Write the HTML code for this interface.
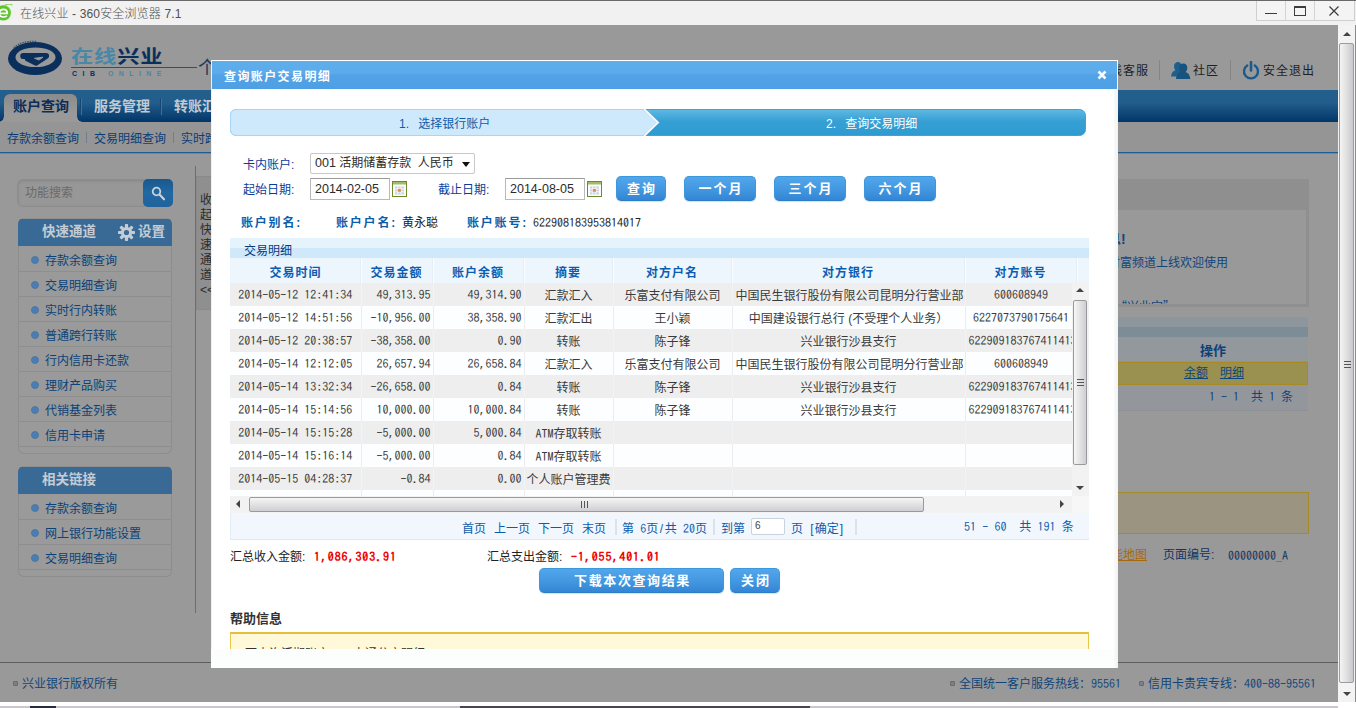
<!DOCTYPE html>
<html lang="zh-CN">
<head>
<meta charset="utf-8">
<title>在线兴业 - 360安全浏览器 7.1</title>
<style>
*{box-sizing:border-box;margin:0;padding:0}
html,body{width:1356px;height:708px;overflow:hidden;background:#fff}
body{position:relative;font-family:"Liberation Sans","Noto Sans CJK SC",sans-serif;font-size:12px;color:#333}
.a{position:absolute;white-space:nowrap}
.num{font-family:"Liberation Sans","Noto Sans CJK SC",sans-serif}
/* ---------- browser chrome ---------- */
#titlebar{left:0;top:0;width:1356px;height:25px;background:#f1f1f1;border-top:1px solid #696969}
#titlebar .t{left:20px;top:0;height:24px;line-height:26px;font-size:12px;letter-spacing:0.150px;font-weight:300;color:#505050}
#winbtn{left:1256px;top:0;width:99px;height:20px;border:1px solid #cfcfcf;border-top:none;background:#f4f4f4}
#winbtn i{position:absolute;top:0;width:1px;height:19px;background:#d4d4d4}
/* ---------- page under overlay ---------- */
#page{left:0;top:25px;width:1338px;height:677px;background:#999;overflow:hidden}
#nav{left:0;top:65px;width:1338px;height:32px;background:linear-gradient(#235f8d 0,#225d8b 40%,#0f4678 75%,#023568 100%)}
#tab1{left:4px;top:69px;width:73px;height:28px;border-radius:6px 6px 0 0;background:linear-gradient(#8b8b8b,#999 70%)}
.navt{top:69px;height:24px;line-height:24px;font-size:14px;font-weight:bold;letter-spacing:0;color:#c3cad1}
.navsep{top:73px;width:1px;height:17px;background:#164a75;box-shadow:1px 0 0 #3a709c}
#sub{left:0;top:97px;width:1338px;height:30px;background:#959595}
#subline{left:0;top:127px;width:1338px;height:2px;background:#1e5c94;border-bottom:1px solid #6d86a0}
.subt{top:105px;height:18px;line-height:18px;color:#0a3d75}
.subs{top:107px;width:1px;height:11px;background:#6f7f90}
.toplink{top:37px;height:18px;line-height:18px;font-size:12px;letter-spacing:1px;color:#1f1f1f}
.topsep{top:35px;width:1px;height:20px;background:#858585}
/* sidebar */
#search{left:17px;top:154px;width:156px;height:28px;border-radius:6px;background:#979797;border:1px solid #8d8d8d;box-shadow:inset 0 1px 3px #858585}
#sbtn{left:143px;top:154px;width:30px;height:28px;border-radius:5px;background:linear-gradient(#19588c,#2268a3 50%,#20639c)}
.panel{left:18px;width:154px;box-shadow:inset 0 0 0 1px #8d8d8d;border-radius:6px;background:#9a9a9a;overflow:hidden}
.ph{position:absolute;left:0;top:1px;width:154px;height:27px;background:#396a95;color:#c6ccd3;font-weight:bold;font-size:13.500px;letter-spacing:0;line-height:25px}
.pi{position:absolute;left:0;width:100%;height:25px;margin-top:2px;border-bottom:1px solid #8e8e8e;line-height:29px;color:#0a4279;padding-left:27px}
.pi:before{content:"";position:absolute;left:13px;top:9px;width:6px;height:6px;border-radius:4px;background:#447fba;border:1px solid #587596}
#vline{left:195px;top:141px;width:1px;height:447px;background:#6e6e6e}
#fold{left:196px;top:151px;width:16px;height:134px;background:#8f8f8f;border:1px solid #8a8a8a}
#fold span{position:absolute;left:3px;width:12px;text-align:center;font-size:12px;line-height:15px;color:#2b2b2b}
/* right content */
#box1{left:1000px;top:154px;width:309px;height:128px;background:#8f8f8f}
#box1 div{position:absolute;left:0;top:31px;width:306px;height:94px;background:#999}
.rt{color:#0f457c}
#footline{left:0;top:637px;width:1338px;height:1px;background:#5e5e5e}
.foot{top:650px;height:18px;line-height:18px;color:#0f457c}
.fb{top:656px;width:5px;height:5px;background:#7c8088;border:1px solid #6a6a6a;border-radius:1px}
/* scrollbar */
#vs{left:1338px;top:25px;width:18px;height:677px;background:#f3f3f3;border-right:1px solid #8a8a8a}
#vsth{left:1px;top:18px;width:15px;height:640px;border:1px solid #9c9c9c;border-radius:2px;background:linear-gradient(90deg,#f4f4f4,#e2e2e4 45%,#c9c9cd 100%)}
.tri{width:0;height:0;border:4px solid transparent}
#bottom{left:0;top:702px;width:1356px;height:6px;background:#fff}
#bottom i{position:absolute;top:4px;height:2px}
/* ---------- dialog ---------- */
#dlg{left:211px;top:60px;width:907px;height:608px;background:#fff;box-shadow:inset 1px 0 0 #f0f0f0;overflow:hidden}
#dh{left:1px;top:1px;width:905px;height:28px;background:linear-gradient(#5eaeec 0,#5caaeb 45%,#52a2e7 50%,#4f9fe5 100%)}
#dh b{position:absolute;left:12px;top:5px;line-height:22px;font-size:12px;color:#fff;letter-spacing:1.400px}
.lbl{color:#0b3c9a;line-height:18px}
.lb{color:#0b5cab;font-weight:bold;line-height:18px;letter-spacing:1.800px}
.inp{background:#fff;border:1px solid #b9b9b9;border-top-color:#9a9a9a;font-size:12.500px;line-height:20px;padding-left:4px;color:#2b2b2b}
.btn{height:25px;border-radius:5px;background:linear-gradient(#52a6eb 0,#4297e0 55%,#3485d4 100%);border:1px solid #3b98dc;border-bottom-color:#2b7dc8;color:#fff;font-weight:bold;font-size:13px;line-height:23px;text-align:center;letter-spacing:2px;text-indent:2px;box-shadow:0 1px 1px #cfe2f5}
#tt1{left:19px;top:178px;width:859px;height:10px;background:#e5f3fd}
#tt2{left:19px;top:188px;width:859px;height:10px;background:#d0e9fa}
#th{left:19px;top:198px;width:859px;height:25px;background:#edf6fd}
#th b{position:absolute;top:5px;padding-left:1px;line-height:20px;font-size:12px;color:#0b5cb0;text-align:center;letter-spacing:1px}
#th i{position:absolute;top:0;margin-left:1px;width:1px;height:25px;background:#fafdff;box-shadow:-1px 0 0 #e3eef7}
#tb{left:19px;top:223px;width:842px;height:213px;overflow:hidden;background:#fcfeff}
#tb table{border-collapse:collapse;table-layout:fixed;width:854px}
#tb td{height:23px;padding:2px 3px 0;font-size:12px;line-height:21px;color:#3a3a3a;text-align:center;overflow:hidden;white-space:nowrap;border-right:1px solid #ececec}
#tb tr:nth-child(odd) td{background:#eeeeee;border-right-color:#f3f3f3}
#tb td.r{text-align:right;padding-right:2px}
#tb td:last-child{padding-right:10px}
#tb td{padding-top:4px;line-height:19px}
#tb td.n{padding-top:1px;line-height:21px;vertical-align:top}
#tb td span.n,#pg span span,span.n{line-height:10px}
#tb td.n,#pg .n,.n{font-family:"IPAGothic","Liberation Mono","Noto Sans CJK SC",monospace;font-size:12px}
#tvs{left:861px;top:222px;width:17px;height:214px;background:#f2f2f2}
#tvsth{left:1px;top:18px;width:14px;height:165px;border:1px solid #9a9a9a;border-radius:2px;background:linear-gradient(90deg,#f6f6f6,#e4e4e6 45%,#cfcfd3 100%)}
#ths{left:19px;top:436px;width:842px;height:17px;background:#f2f2f2}
#thsth{left:19px;top:1px;width:675px;height:15px;border:1px solid #9a9a9a;border-radius:2px;background:linear-gradient(#f6f6f6,#e4e4e6 45%,#cfcfd3 100%)}
#pg{left:19px;top:453px;width:859px;height:27px;background:#f2f7fd;border-bottom:1px solid #dfe9f2;border-left:1px solid #e4edf5;color:#0b5cab}
#pg span{position:absolute;top:7px;line-height:18px}
#pg i{position:absolute;top:6px;width:2px;height:16px;background:#dbe3ea}
#help{left:19px;top:572px;width:859px;height:30px;background:#fff9d9;border:1px solid #e8c84a;border-top:2px solid #e3bf3c}
#dfoot{left:0;top:589px;width:907px;height:19px;background:#fcfefe}
</style>
</head>
<body>
<!-- ================= title bar ================= -->
<div id="titlebar" class="a">
  <svg class="a" style="left:0;top:3px" width="14" height="19" viewBox="0 0 14 19"><circle cx="3.300" cy="8.800" r="8.300" fill="#dff2d3"/><circle cx="3.300" cy="8.800" r="7.600" fill="#5fc42f"/><path d="M-.5 9.300H7.300C7.300 6.600 5.800 5.300 3.500 5.300 1.100 5.300-.6 6.900-.6 9.200c0 2.400 1.700 3.800 4.100 3.800 1.400 0 2.500-.4 3.400-1.100" fill="none" stroke="#fff" stroke-width="1.700"/><path d="M5 1.200C7.500-.2 10.500-.3 12.500 1" fill="none" stroke="#8fd766" stroke-width="1.300"/></svg>
  <div class="a t">在线兴业 - 360安全浏览器 7.1</div>
  <div id="winbtn" class="a"><i style="left:28px"></i><i style="left:57px"></i>
    <div class="a" style="left:8px;top:12px;width:12px;height:1px;background:#3c3c3c"></div>
    <div class="a" style="left:37px;top:5px;width:12px;height:10px;border:1px solid #3c3c3c;border-top-width:2px"></div>
    <svg class="a" style="left:72px;top:5px" width="10" height="10" viewBox="0 0 10 10"><path d="M.5.5l9 9M9.500.5l-9 9" stroke="#3c3c3c" stroke-width="1.200" fill="none"/></svg>
  </div>
</div>

<!-- ================= dimmed page ================= -->
<div id="page" class="a">
  <!-- logo -->
  <svg class="a" style="left:6px;top:14px" width="60" height="40" viewBox="0 0 60 40">
    <ellipse cx="29" cy="19.500" rx="27" ry="16.500" fill="#0b2f5c"/>
    <ellipse cx="29.500" cy="18.300" rx="20" ry="9.800" fill="#999"/>
    <path d="M17.300 17H40L29.800 23.600 22 19.600" fill="none" stroke="#0b2f5c" stroke-width="6.200" stroke-linejoin="round" stroke-linecap="round"/><path d="M28.500 19.300L37 18.200 33 21z" fill="#999" stroke="#999" stroke-width="1" stroke-linejoin="round"/>
    <path d="M8 9C12 4 20 2 31 2.500" stroke="#42536a" stroke-width="1.500" fill="none" stroke-dasharray="1.500 1"/>
  </svg>
  <div class="a" style="left:71px;top:18px;height:28px;line-height:28px;font-size:18.500px;font-weight:bold;letter-spacing:0.750px;transform:scaleX(1.2);transform-origin:0 0;color:#0b2f5c"><span style="color:#4a86a6">在线</span>兴业</div>
  <div class="a" style="left:71px;top:42px;width:126px;height:1px;background:#4a4a4a"></div>
  <div class="a" style="left:72px;top:44px;height:10px;line-height:10px;font-size:7px;font-weight:bold;letter-spacing:5.500px;color:#0b2f5c">CIB <span style="color:#4a86a6;letter-spacing:5.400px">ONLINE</span></div>
  <div class="a" style="left:198px;top:32px;height:22px;line-height:22px;font-size:18px;color:#1c3a5c">个</div>
  <!-- top links -->
  <div class="a toplink" style="left:1097px">在线客服</div>
  <div class="a topsep" style="left:1159px"></div>
  <svg class="a" style="left:1171px;top:37px" width="20" height="18" viewBox="0 0 20 18"><path d="M7 0c2.200 0 3.600 1.800 3.600 4.200 0 1.800-.7 3.200-1.600 4 2.600.8 4 2.600 4.500 6.300H0c.4-3.600 2-5.500 4.500-6.300C3.600 7.400 3 6 3 4.200 3 1.800 4.800 0 7 0z" fill="#1f5f8e"/><path d="M12.500 1.500c2.300 0 3.800 1.900 3.800 4.300 0 1.900-.7 3.300-1.700 4.100 2.700.9 4.200 2.800 4.700 7.100H5c.5-4.300 2-6.200 4.700-7.100-1-.8-1.700-2.200-1.700-4.100 0-2.400 1.900-4.300 4.500-4.300z" fill="#18527f"/></svg>
  <div class="a toplink" style="left:1193px">社区</div>
  <div class="a topsep" style="left:1230px"></div>
  <svg class="a" style="left:1242px;top:36px" width="18" height="19" viewBox="0 0 18 19"><path d="M5.200 4.500A7 7 0 1 0 12.800 4.500" fill="none" stroke="#1b5a8c" stroke-width="2.400" stroke-linecap="round"/><path d="M9 1v8.500" stroke="#1b5a8c" stroke-width="2.600" stroke-linecap="round"/></svg>
  <div class="a toplink" style="left:1263px">安全退出</div>

  <!-- nav -->
  <div id="nav" class="a"></div>
  <div id="tab1" class="a"></div>
  <div class="a" style="left:-1px;top:92px;width:5px;height:5px;background:radial-gradient(circle at 0 0,rgba(153,153,153,0) 4.300px,#999 5px)"></div><div class="a" style="left:77px;top:92px;width:5px;height:5px;background:radial-gradient(circle at 100% 0,rgba(153,153,153,0) 4.300px,#999 5px)"></div>
  <div class="a navt" style="left:13px;color:#0c2d57">账户查询</div>
  <div class="a navsep" style="left:80px"></div>
  <div class="a navt" style="left:94px">服务管理</div>
  <div class="a navsep" style="left:160px"></div>
  <div class="a navt" style="left:174px">转账汇款</div>
  <div id="sub" class="a"></div>
  <div id="subline" class="a"></div>
  <div class="a subt" style="left:7px">存款余额查询</div><div class="a subs" style="left:86px"></div>
  <div class="a subt" style="left:94px">交易明细查询</div><div class="a subs" style="left:173px"></div>
  <div class="a subt" style="left:181px">实时跨行转账</div>

  <!-- sidebar -->
  <div id="search" class="a"><div class="a" style="left:7px;top:4px;line-height:18px;color:#6a6a6a">功能搜索</div></div>
  <div id="sbtn" class="a"><svg class="a" style="left:8px;top:7px" width="15" height="15" viewBox="0 0 15 15"><circle cx="5.500" cy="5.500" r="3.800" fill="none" stroke="#c9d2da" stroke-width="1.800"/><path d="M8.500 8.500l4.500 4.800" stroke="#c9d2da" stroke-width="2.200" stroke-linecap="round"/></svg></div>

  <div class="a panel" style="top:193px;height:236px">
    <div class="ph"><span class="a" style="left:24px;top:0">快速通道</span>
      <svg class="a" style="left:100px;top:5px" width="17" height="17" viewBox="0 0 17 17"><g fill="#c6ccd3"><circle cx="8.500" cy="8.500" r="5.600"/><g id="gt"><rect x="6.900" y="0" width="3.200" height="17" rx=".8"/></g><rect x="6.900" y="0" width="3.200" height="17" rx=".8" transform="rotate(45 8.500 8.500)"/><rect x="6.900" y="0" width="3.200" height="17" rx=".8" transform="rotate(90 8.500 8.500)"/><rect x="6.900" y="0" width="3.200" height="17" rx=".8" transform="rotate(135 8.500 8.500)"/></g><circle cx="8.500" cy="8.500" r="2.600" fill="#396a95"/></svg>
      <span class="a" style="left:120px;top:0">设置</span></div>
    <div class="pi" style="top:27px">存款余额查询</div>
    <div class="pi" style="top:52px">交易明细查询</div>
    <div class="pi" style="top:77px">实时行内转账</div>
    <div class="pi" style="top:102px">普通跨行转账</div>
    <div class="pi" style="top:127px">行内信用卡还款</div>
    <div class="pi" style="top:152px">理财产品购买</div>
    <div class="pi" style="top:177px">代销基金列表</div>
    <div class="pi" style="top:202px">信用卡申请</div>
  </div>
  <div class="a panel" style="top:441px;height:111px">
    <div class="ph"><span class="a" style="left:24px;top:0">相关链接</span></div>
    <div class="pi" style="top:27px">存款余额查询</div>
    <div class="pi" style="top:52px">网上银行功能设置</div>
    <div class="pi" style="top:77px">交易明细查询</div>
  </div>
  <div id="vline" class="a"></div>
  <div id="fold" class="a"><span style="top:16px">收<br>起<br>快<br>速<br>通<br>道<br>&lt;&lt;</span></div>

  <!-- right content visible beside the dialog -->
  <div id="box1" class="a"><div></div></div>
  <div class="a rt" style="left:1079px;top:205px;line-height:18px;font-size:14px;font-weight:bold">好消息!</div>
  <div class="a rt" style="left:1108px;top:229px;line-height:18px">财富频道上线欢迎使用</div>
  <div class="a rt" style="left:1115px;top:273px;height:6px;overflow:hidden;line-height:16px;font-family:'Noto Sans CJK SC',sans-serif">“兴业宝”</div>
  <div class="a" style="left:1000px;top:292px;width:308px;height:10px;background:#8d969c"></div>
  <div class="a" style="left:1000px;top:302px;width:308px;height:10px;background:#7d8d98"></div>
  <div class="a" style="left:1000px;top:312px;width:308px;height:25px;background:#93989d;border-bottom:1px solid #8e9398"></div>
  <div class="a rt" style="left:1200px;top:316px;line-height:20px;font-size:13px;font-weight:bold;color:#0d4178">操作</div>
  <div class="a" style="left:1000px;top:337px;width:308px;height:23px;background:#9a9150;border:1px solid #a88a22"></div>
  <div class="a rt" style="left:1184px;top:339px;line-height:19px;text-decoration:underline">余额</div>
  <div class="a rt" style="left:1220px;top:339px;line-height:19px;text-decoration:underline">明细</div>
  <div class="a" style="left:1000px;top:360px;width:308px;height:26px;background:#93979c;border-bottom:1px solid #8e9297"></div>
  <div class="a rt" style="left:1209px;top:363px;line-height:19px;letter-spacing:0;word-spacing:0"><span class="n">1 - 1&nbsp;&nbsp;</span>共<span class="n"> 1 </span>条</div>
  <div class="a" style="left:1000px;top:467px;width:309px;height:42px;background:#9b9481;border:1px solid #a38b2c"></div>
  <div class="a" style="left:1099px;top:521px;line-height:18px;color:#a5690f;text-decoration:underline">功能地图</div>
  <div class="a" style="left:1163px;top:521px;line-height:18px;color:#10355f">页面编号:</div>
  <div class="a n" style="left:1228px;top:521px;line-height:18px;color:#10355f">00000000_A</div>

  <!-- footer -->
  <div id="footline" class="a"></div>
  <div class="a fb" style="left:13px"></div><div class="a foot" style="left:22px">兴业银行版权所有</div>
  <div class="a fb" style="left:950px"></div><div class="a foot" style="left:959px">全国统一客户服务热线：<span class="n">95561</span></div>
  <div class="a fb" style="left:1139px"></div><div class="a foot" style="left:1148px">信用卡贵宾专线：<span class="n">400-88-95561</span></div>
</div>

<!-- page scrollbar -->
<div id="vs" class="a">
  <div class="a tri" style="left:5px;top:7px;border-bottom:4px solid #444;border-top:none"></div>
  <div id="vsth" class="a"><div class="a" style="left:4px;top:317px;width:7px;height:7px;border-top:1px solid #555;border-bottom:1px solid #555"><div style="margin-top:2px;height:1px;background:#555"></div></div></div>
  <div class="a tri" style="left:5px;top:667px;border-top:4px solid #444;border-bottom:none"></div>
</div>
<div id="bottom" class="a"><i style="left:0;width:1338px;background:#c9c7cc"></i><i style="left:30px;width:26px;background:#2a2a40"></i><i style="left:460px;width:350px;background:#4a4650"></i></div>

<!-- ================= dialog ================= -->
<div id="dlg" class="a">
  <div id="dh" class="a"><b>查询账户交易明细</b>
    <svg class="a" style="left:885px;top:9px" width="10" height="10" viewBox="0 0 10 10"><path d="M1.500 1.500l7 7M8.500 1.500l-7 7" stroke="#f4f9ff" stroke-width="2.600" fill="none"/></svg>
  </div>
  <!-- steps -->
  <svg class="a" style="left:19px;top:49px" width="856" height="27" viewBox="0 0 856 27">
    <defs><linearGradient id="g2" x1="0" y1="0" x2="0" y2="1"><stop offset="0" stop-color="#5fb8e2"/><stop offset=".45" stop-color="#36a0d4"/><stop offset="1" stop-color="#2d9bd1"/></linearGradient></defs>
    <rect x=".5" y=".5" width="855" height="26" rx="6" fill="url(#g2)" stroke="#3ea4d7"/>
    <path d="M6 .5H413l14 13-14 13H6A5.500 5.500 0 0 1 .5 21V6A5.500 5.500 0 0 1 6 .5z" fill="#cfe9fc" stroke="#a9d5f6"/>
    <path d="M414 0l14 13.500-14 13.500" fill="none" stroke="#f2faff" stroke-width="2"/>
  </svg>
  <div class="a" style="left:188px;top:55px;line-height:18px;color:#0b5cab;word-spacing:6px">1. 选择银行账户</div>
  <div class="a" style="left:615px;top:55px;line-height:18px;color:#fff;word-spacing:6px">2. 查询交易明细</div>
  <!-- form -->
  <div class="a lbl" style="left:32px;top:96px">卡内账户:</div>
  <div class="a inp" style="left:99px;top:93px;width:165px;height:21px;border-color:#c8c8c8;border-radius:2px;font-size:12px;line-height:19px"><span style="font-size:12.500px">001</span> 活期储蓄存款&nbsp; 人民币<div class="a tri" style="left:151px;top:8px;border-top:5px solid #111;border-bottom:none"></div></div>
  <div class="a lbl" style="left:32px;top:121px">起始日期:</div>
  <div class="a inp" style="left:99px;top:118px;width:80px;height:22px">2014-02-05</div>
  <svg class="a cal" style="left:181px;top:121px" width="15" height="16" viewBox="0 0 15 16"><rect x=".5" y=".5" width="14" height="15" fill="#fdfdf8" stroke="#6d8a2c"/><rect x="1" y="1" width="13" height="2.500" fill="#a3bb66"/><rect x="3" y="5.500" width="9" height="8" fill="#c9d4ea"/><path d="M3 8h9M3 10.800h9M5.800 5.500v8M8.900 5.500v8" stroke="#fdfdf8" stroke-width=".9"/><rect x="5.800" y="8" width="3.100" height="2.800" fill="#f08a3c"/></svg>
  <div class="a lbl" style="left:227px;top:121px">截止日期:</div>
  <div class="a inp" style="left:294px;top:118px;width:80px;height:22px">2014-08-05</div>
  <svg class="a cal" style="left:376px;top:121px" width="15" height="16" viewBox="0 0 15 16"><rect x=".5" y=".5" width="14" height="15" fill="#fdfdf8" stroke="#6d8a2c"/><rect x="1" y="1" width="13" height="2.500" fill="#a3bb66"/><rect x="3" y="5.500" width="9" height="8" fill="#c9d4ea"/><path d="M3 8h9M3 10.800h9M5.800 5.500v8M8.900 5.500v8" stroke="#fdfdf8" stroke-width=".9"/><rect x="5.800" y="8" width="3.100" height="2.800" fill="#f08a3c"/></svg>
  <div class="a btn" style="left:405px;top:116px;width:50px">查询</div>
  <div class="a btn" style="left:473px;top:116px;width:72px">一个月</div>
  <div class="a btn" style="left:563px;top:116px;width:72px">三个月</div>
  <div class="a btn" style="left:653px;top:116px;width:72px">六个月</div>
  <div class="a lb" style="left:30px;top:154px">账户别名:</div>
  <div class="a lb" style="left:125px;top:154px">账户户名:</div>
  <div class="a" style="left:191px;top:154px;line-height:18px;color:#222">黄永聪</div>
  <div class="a lb" style="left:256px;top:154px">账户账号:</div>
  <div class="a n" style="left:322px;top:153px;line-height:18px;color:#222">622908183953814017</div>
  <!-- table -->
  <div id="tt1" class="a"></div><div id="tt2" class="a"></div>
  <div class="a" style="left:33px;top:182px;line-height:18px;color:#0b3a7c">交易明细</div>
  <div id="th" class="a">
    <b style="left:0;width:130px">交易时间</b><i style="left:130px"></i>
    <b style="left:130px;width:72px">交易金额</b><i style="left:202px"></i>
    <b style="left:202px;width:91px">账户余额</b><i style="left:293px"></i>
    <b style="left:293px;width:89px">摘要</b><i style="left:382px"></i>
    <b style="left:382px;width:119px">对方户名</b><i style="left:501px"></i>
    <b style="left:501px;width:233px">对方银行</b><i style="left:734px"></i>
    <b style="left:734px;width:112px">对方账号</b><i style="left:846px"></i>
  </div>
  <div id="tb" class="a"><table>
    <colgroup><col style="width:131px"><col style="width:72px"><col style="width:91px"><col style="width:89px"><col style="width:119px"><col style="width:233px"><col style="width:119px"></colgroup>
    <tr><td class="n">2014-05-12 12:41:34</td><td class="n r">49,313.95</td><td class="n r">49,314.90</td><td>汇款汇入</td><td>乐富支付有限公司</td><td>中国民生银行股份有限公司昆明分行营业部</td><td class="n">600608949</td></tr>
    <tr><td class="n">2014-05-12 14:51:56</td><td class="n r">-10,956.00</td><td class="n r">38,358.90</td><td>汇款汇出</td><td>王小颖</td><td>中国建设银行总行 (不受理个人业务）</td><td class="n">6227073790175641</td></tr>
    <tr><td class="n">2014-05-12 20:38:57</td><td class="n r">-38,358.00</td><td class="n r">0.90</td><td>转账</td><td>陈子锋</td><td>兴业银行沙县支行</td><td class="n">622909183767411413</td></tr>
    <tr><td class="n">2014-05-14 12:12:05</td><td class="n r">26,657.94</td><td class="n r">26,658.84</td><td>汇款汇入</td><td>乐富支付有限公司</td><td>中国民生银行股份有限公司昆明分行营业部</td><td class="n">600608949</td></tr>
    <tr><td class="n">2014-05-14 13:32:34</td><td class="n r">-26,658.00</td><td class="n r">0.84</td><td>转账</td><td>陈子锋</td><td>兴业银行沙县支行</td><td class="n">622909183767411413</td></tr>
    <tr><td class="n">2014-05-14 15:14:56</td><td class="n r">10,000.00</td><td class="n r">10,000.84</td><td>转账</td><td>陈子锋</td><td>兴业银行沙县支行</td><td class="n">622909183767411413</td></tr>
    <tr><td class="n">2014-05-14 15:15:28</td><td class="n r">-5,000.00</td><td class="n r">5,000.84</td><td><span class="n">ATM</span>存取转账</td><td></td><td></td><td></td></tr>
    <tr><td class="n">2014-05-14 15:16:14</td><td class="n r">-5,000.00</td><td class="n r">0.84</td><td><span class="n">ATM</span>存取转账</td><td></td><td></td><td></td></tr>
    <tr><td class="n">2014-05-15 04:28:37</td><td class="n r">-0.84</td><td class="n r">0.00</td><td style="padding:4px 0 0">个人账户管理费</td><td></td><td></td><td></td></tr>
    <tr><td class="n">2014-05-15 10:02:11</td><td class="n r">30,000.00</td><td class="n r">30,000.00</td><td>汇款汇入</td><td>乐富支付有限公司</td><td>中国民生银行股份有限公司昆明分行营业部</td><td class="n">600608949</td></tr>
  </table></div>
  <div id="tvs" class="a">
    <div class="a tri" style="left:4px;top:6px;border-bottom:4px solid #444;border-top:none"></div>
    <div id="tvsth" class="a"><div class="a" style="left:3px;top:78px;width:7px;height:7px;border-top:1px solid #555;border-bottom:1px solid #555"><div style="margin-top:2px;height:1px;background:#555"></div></div></div>
    <div class="a tri" style="left:4px;top:204px;border-top:4px solid #444;border-bottom:none"></div>
  </div>
  <div id="ths" class="a">
    <div class="a tri" style="left:6px;top:4px;border-right:4px solid #444;border-left:none"></div>
    <div id="thsth" class="a"><div class="a" style="left:331px;top:3px;width:7px;height:7px;border-left:1px solid #555;border-right:1px solid #555"><div style="margin-left:2px;width:1px;height:7px;background:#555"></div></div></div>
    <div class="a tri" style="left:830px;top:4px;border-left:4px solid #444;border-right:none"></div>
  </div>
  <div class="a" style="left:861px;top:436px;width:17px;height:17px;background:#f7f7f7"></div>
  <div id="pg" class="a">
    <span style="left:231px">首页</span><span style="left:263px">上一页</span><span style="left:307px">下一页</span><span style="left:351px">末页</span>
    <i style="left:384px"></i>
    <span style="left:391px;word-spacing:3px">第 <span class="n" style="position:static">6</span>页<span style="position:static;padding:0 1.500px">/</span>共 <span class="n" style="position:static">20</span>页</span>
    <i style="left:482px"></i>
    <span style="left:490px">到第</span>
    <div class="a" style="left:520px;top:5px;width:34px;height:17px;background:#fff;border:1px solid #c9d3dc;border-radius:2px;font-size:10px;line-height:13px;padding-left:3px;color:#444">6</div>
    <span style="left:560px;word-spacing:3px">页 <span style="position:static;padding:0 1px">[</span>确定<span style="position:static;padding:0 1px">]</span></span>
    <i style="left:624px"></i>
    <span style="left:733px;top:4px;word-spacing:0.300px" class="n">51 - 60&nbsp;&nbsp;<span style="position:static;font-family:'Liberation Sans','Noto Sans CJK SC',sans-serif">共</span> 191 <span style="position:static;font-family:'Liberation Sans','Noto Sans CJK SC',sans-serif">条</span></span>
  </div>
  <!-- summary -->
  <div class="a" style="left:19px;top:488px;line-height:18px;color:#222">汇总收入金额:</div>
  <div class="a" style="left:103px;top:487px;line-height:18px;color:#f00000;font-weight:bold;font-family:'IPAGothic','Liberation Mono',monospace;font-size:12px;letter-spacing:0.900px">1,086,303.91</div>
  <div class="a" style="left:276px;top:488px;line-height:18px;color:#222">汇总支出金额:</div>
  <div class="a" style="left:360px;top:487px;line-height:18px;color:#f00000;font-weight:bold;font-family:'IPAGothic','Liberation Mono',monospace;font-size:12px;letter-spacing:0.900px">-1,055,401.01</div>
  <div class="a btn" style="left:328px;top:508px;width:185px;font-size:13px;letter-spacing:1.600px">下载本次查询结果</div>
  <div class="a btn" style="left:519px;top:508px;width:50px">关闭</div>
  <!-- help -->
  <div class="a" style="left:19px;top:550px;line-height:18px;font-size:13px;font-weight:bold;color:#333">帮助信息</div>
  <div id="help" class="a"><div class="a" style="left:14px;top:11px;line-height:18px;color:#333">可查询活期账户、一卡通分户明细。</div></div>
  <div id="dfoot" class="a"></div>
  <div class="a" style="left:903px;top:29px;width:4px;height:579px;background:linear-gradient(90deg,#f9fafa,#f1f3f3)"></div>
</div>

</body>
</html>
